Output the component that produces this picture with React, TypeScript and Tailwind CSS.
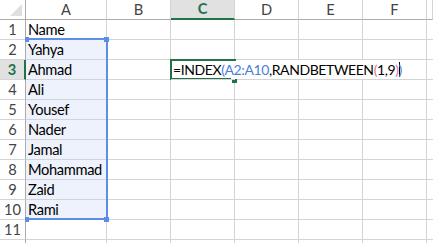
const names = ['Name', 'Yahya', 'Ahmad', 'Ali', 'Yousef', 'Nader', 'Jamal', 'Mohammad', 'Zaid', 'Rami', '', ''];
const cols = ['A', 'B', 'C', 'D', 'E', 'F', ''];
const widths = ['w-[81px]', 'w-[64px]', 'w-[64px]', 'w-[64px]', 'w-[64px]', 'w-[64px]', 'flex-1'];

function HeaderRow() {
  return (
    <div className="flex h-[20px]">
      <div className="relative w-[26px] shrink-0 border-r border-b border-[#ababab] bg-white">
        <svg className="absolute left-[10px] top-[4px]" width="13" height="13" viewBox="0 0 13 13">
          <polygon points="12,0 12,12 0,12" fill="#dfdfdf" />
        </svg>
      </div>
      {cols.map((c, i) => (
        <div
          key={i}
          className={`${widths[i]} shrink-0 flex items-end justify-center leading-[18px] ${
            c === 'C'
              ? 'bg-[#e1e1e1] border-b-2 border-b-[#217346] border-r border-r-[#d4d4d4] text-[#217346] font-bold'
              : 'bg-white border-b border-b-[#ababab] border-r border-r-[#d4d4d4] text-[#444]'
          }`}
        >
          {c}
        </div>
      ))}
    </div>
  );
}

function Row({ n, name }: { n: number; name: string }) {
  const active = n === 3;
  const inRange = n >= 2 && n <= 10;
  return (
    <div className="flex h-[20px] shrink-0">
      <div
        className={`w-[26px] shrink-0 flex items-end justify-center leading-[18px] border-b border-b-[#d4d4d4] ${
          active
            ? 'bg-[#e1e1e1] border-r-2 border-r-[#217346] text-[#217346] font-bold'
            : 'bg-white border-r border-r-[#ababab] text-[#444]'
        }`}
      >
        {n <= 11 ? n : ''}
      </div>
      <div
        className={`w-[81px] shrink-0 flex items-end pl-[2px] leading-[18px] tracking-[-0.35px] text-black border-r border-b border-[#d4d4d4] ${
          inRange ? 'bg-[#eef2fc]' : 'bg-white'
        }`}
      >
        {name}
      </div>
      <div className="w-[64px] shrink-0 border-r border-b border-[#d4d4d4]" />
      {active ? (
        <>
          <div className="relative z-10 w-[64px] shrink-0 border-b border-[#d4d4d4] flex items-end pl-[2px] leading-[18px] text-[14px] tracking-[-0.4px] whitespace-nowrap overflow-visible">
            <span>
              =INDEX<span className="text-[#4a7fd8]">(A2:A10</span>,RANDBETWEEN
              <span className="text-[#e2708f]">(</span>1,9<span className="text-[#e2708f]">)</span>
              <span className="text-[#4a7fd8]">)</span>
            </span>
          </div>
          <div className="w-[64px] shrink-0 border-b border-[#d4d4d4]" />
          <div className="w-[64px] shrink-0 border-b border-[#d4d4d4]" />
          <div className="w-[64px] shrink-0 border-r border-b border-[#d4d4d4]" />
        </>
      ) : (
        <>
          <div className="w-[64px] shrink-0 border-r border-b border-[#d4d4d4]" />
          <div className="w-[64px] shrink-0 border-r border-b border-[#d4d4d4]" />
          <div className="w-[64px] shrink-0 border-r border-b border-[#d4d4d4]" />
          <div className="w-[64px] shrink-0 border-r border-b border-[#d4d4d4]" />
        </>
      )}
      <div className="flex-1 border-b border-[#d4d4d4]" />
    </div>
  );
}

export default function App() {
  return (
    <div
      className="relative w-[433px] h-[243px] overflow-hidden bg-white text-[14.67px]"
      style={{ fontFamily: 'Lato, "Open Sans", sans-serif' }}
    >
      <div className="flex flex-col">
        <HeaderRow />
        {names.map((name, i) => (
          <Row key={i} n={i + 1} name={name} />
        ))}
      </div>

      {/* reference range A2:A10 */}
      <div className="absolute left-[26px] top-[38px] w-[82px] h-[182px] border-t-2 border-r-2 border-b-2 border-[#5e8de6]" />
      <div className="absolute left-[25px] top-[37px] w-[4px] h-[5px] bg-[#5e8de6]" />
      <div className="absolute left-[104px] top-[37px] w-[5px] h-[5px] bg-[#5e8de6]" />
      <div className="absolute left-[25px] top-[217px] w-[4px] h-[5px] bg-[#5e8de6]" />
      <div className="absolute left-[104px] top-[217px] w-[5px] h-[5px] bg-[#5e8de6]" />

      {/* active cell C3 */}
      <div className="absolute left-[170px] top-[59px] w-[66px] h-[2px] bg-[#217346]" />
      <div className="absolute left-[170px] top-[59px] w-[2px] h-[21px] bg-[#217346]" />
      <div className="absolute left-[170px] top-[78px] w-[61px] h-[2px] bg-[#217346]" />
      <div className="absolute left-[232px] top-[79px] w-[5px] h-[4px] bg-[#217346]" />

      {/* caret */}
      <div className="absolute left-[399px] top-[62px] w-[1px] h-[15px] bg-black" />
    </div>
  );
}
